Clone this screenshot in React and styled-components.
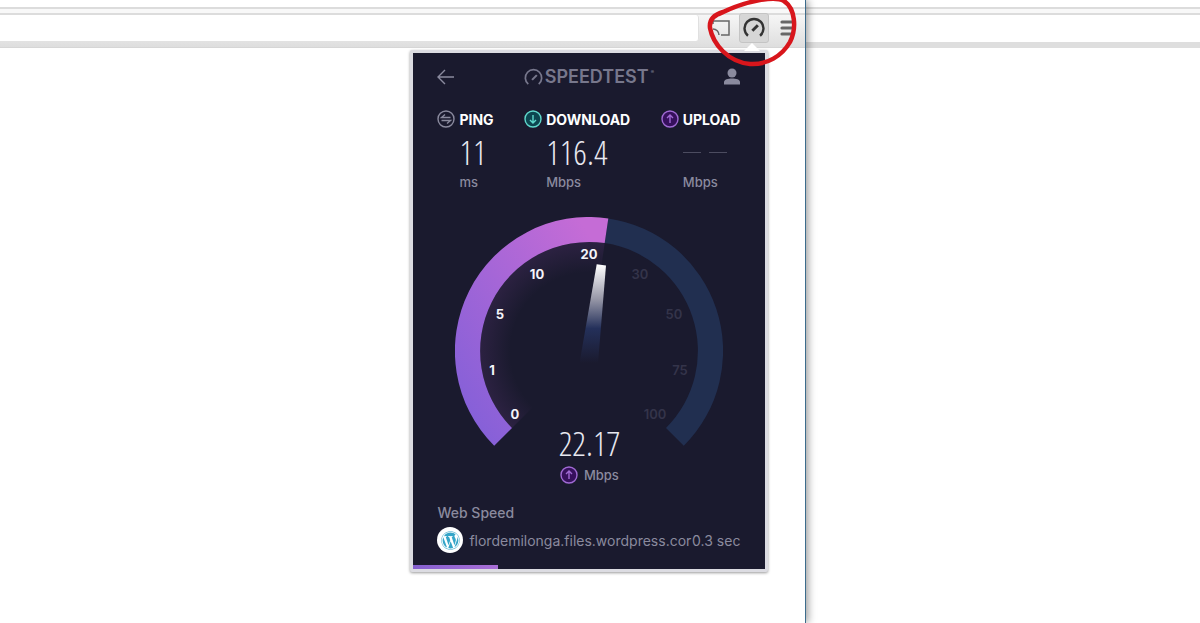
import styled, { createGlobalStyle } from 'styled-components';
import { FaWordpress } from 'react-icons/fa';

const GlobalStyle = createGlobalStyle`
  *,
  *::before,
  *::after {
    box-sizing: border-box;
  }

  body {
    margin: 0;
    background: #fff;
    font-family: Inter, 'Open Sans', sans-serif;
    overflow: hidden;
  }

  h1, h2, p, dl, dt, dd {
    margin: 0;
  }
`;

const Desktop = styled.div`
  display: flex;
  min-height: 100vh;
`;

const Window = styled.section`
  position: relative;
  flex: ${({ $front }) => ($front ? '0 0 67.2%' : '1')};
  min-width: 0;
  z-index: ${({ $front }) => ($front ? 1 : 0)};
  background: #fff;
  border-right: ${({ $front }) => ($front ? '1px solid #3d6c8c' : 'none')};
  box-shadow: ${({ $front }) => ($front ? '2px 0 8px rgba(0, 0, 0, 0.4)' : 'none')};
`;

const TabStrip = styled.div`
  height: 15px;
  padding-top: 7px;

  &::after {
    content: '';
    display: block;
    height: 8px;
    background: #f8f8f8;
    border-top: 2px solid #dcdcdc;
    border-bottom: 2px solid #dcdcdc;
  }
`;

const Toolbar = styled.div`
  display: flex;
  align-items: center;
  gap: 8px;
  height: 33px;
  padding: ${({ $front }) => ($front ? '0 8px 6px 0' : '0')};
  background: ${({ $front }) => ($front ? 'linear-gradient(#f6f6f6, #dedede)' : '#fff')};
  border-bottom: ${({ $front }) => ($front ? '1px solid #d6d6d6' : '6px solid #dedede')};
`;

const Address = styled.input`
  flex: 1;
  min-width: 0;
  height: 26px;
  margin-right: 4px;
  border: none;
  border-right: 1px solid #e0e0e0;
  border-radius: 0 3px 3px 0;
  background: #fff;
  outline: none;
`;

const ToolButton = styled.button`
  display: flex;
  align-items: center;
  justify-content: center;
  flex: none;
  width: ${({ $active }) => ($active ? '30px' : '20px')};
  height: 30px;
  padding: 0;
  border: 1px solid ${({ $active }) => ($active ? '#c4c4c4' : 'transparent')};
  border-radius: 3px;
  background: ${({ $active }) => ($active ? '#d6d6d6' : 'transparent')};
  color: ${({ $active }) => ($active ? '#333' : '#666')};
`;

const Popup = styled.main`
  position: absolute;
  top: 50px;
  right: 37px;
  width: 358px;
  border: 3px solid #dcdce2;
  border-radius: 2px;
  background: #1a1a2e;
  color: #8a8a9e;
  box-shadow: 0 1px 3px rgba(0, 0, 0, 0.4);

  &::before {
    content: '';
    position: absolute;
    top: -10px;
    right: 5px;
    border: 8px solid transparent;
    border-top: none;
    border-bottom-color: #fff;
  }
`;

const Header = styled.header`
  display: flex;
  align-items: center;
  justify-content: space-between;
  height: 48px;
  padding: 0 24px;
`;

const IconButton = styled.button`
  display: flex;
  padding: 0;
  border: none;
  background: none;
  color: inherit;
`;

const Brand = styled.h1`
  display: flex;
  align-items: center;
  gap: 2px;
  color: #77778c;
  font-size: 18px;
  font-weight: 600;
  line-height: 20px;

  sup {
    align-self: flex-start;
    font-size: 5px;
    line-height: 10px;
  }
`;

const Stats = styled.dl`
  display: flex;
  justify-content: space-between;
  height: 108px;
  padding: 8px 25px 0 24px;
`;

const Stat = styled.div`
  display: grid;
  grid-template-columns: 18px auto;
  grid-template-rows: 20px 46px 14px;
  column-gap: 4px;
`;

const StatName = styled.dt`
  grid-column: 1 / 3;
  display: flex;
  align-items: center;
  gap: 4px;
  color: #fff;
  font-size: 14px;
  font-weight: 700;
`;

const Value = styled.dd`
  grid-column: 2;
  color: #e8e8f0;
  font-family: 'Open Sans Condensed Light', 'Noto Sans ExtraCondensed Light', 'Roboto Condensed', Roboto, sans-serif;
  font-size: 34px;
  font-weight: 200;
  line-height: 46px;
`;

const Dashes = styled.dd`
  grid-column: 2;
  display: flex;
  align-items: center;
  gap: 8px;

  &::before,
  &::after {
    content: '';
    width: 18px;
    height: 1px;
    background: #4c4c60;
  }
`;

const Unit = styled.dd`
  grid-column: 2;
  font-size: 13px;
  font-weight: 500;
  line-height: 14px;
`;

const GaugeSvg = styled.svg`
  display: block;
  width: 268px;
  height: 230px;
  margin: 8px auto 0;
`;

const GaugeLabel = styled.text`
  fill: ${({ $lit }) => ($lit ? '#f4f4fa' : '#34344a')};
  font-size: 13px;
  font-weight: ${({ $lit }) => ($lit ? 700 : 600)};
  text-anchor: middle;
`;

const Reading = styled.div`
  display: flex;
  flex-direction: column;
  align-items: center;
  margin-top: -26px;
`;

const ReadingValue = styled(Value).attrs({ as: 'p' })`
  line-height: 44px;
`;

const ReadingUnit = styled.p`
  display: flex;
  align-items: center;
  gap: 6px;
  font-size: 13px;
  font-weight: 500;
  line-height: 20px;
`;

const WebSpeed = styled.section`
  padding: 20px 25px 12px 24px;
  font-size: 14px;
`;

const SectionTitle = styled.h2`
  font-size: 14px;
  font-weight: 500;
  line-height: 16px;
`;

const Site = styled.p`
  display: flex;
  align-items: center;
  margin-top: 6px;
`;

const SiteBadge = styled.span`
  display: flex;
  align-items: center;
  justify-content: center;
  flex: none;
  width: 26px;
  height: 26px;
  margin-right: 6px;
  border-radius: 50%;
  background: #fff;
  color: #35a5c8;
`;

const Host = styled.span`
  flex: 1;
  min-width: 0;
  overflow: hidden;
  white-space: nowrap;
`;

const LoadTime = styled.span`
  flex: none;
`;

const Progress = styled.div`
  height: 4px;
  width: 24%;
  background: linear-gradient(90deg, #8560d0, #a96fd6);
`;

const Scribble = styled.svg`
  position: absolute;
  top: 0;
  right: 0;
  width: 106px;
  height: 72px;
  pointer-events: none;
`;

const ticks = [
  { label: '0', x: 60, y: 202 },
  { label: '1', x: 37, y: 158 },
  { label: '5', x: 45, y: 102 },
  { label: '10', x: 82, y: 62 },
  { label: '20', x: 134, y: 42 },
  { label: '30', x: 185, y: 62 },
  { label: '50', x: 219, y: 102 },
  { label: '75', x: 225, y: 158 },
  { label: '100', x: 200, y: 202 },
];

const SPEED = 22.17;

const CircleIcon = ({ kind }) => {
  const colors = { ping: '#8a8a9e', download: '#5fd9cc', upload: '#a06ad4' };
  const fills = { ping: 'none', download: '#0c4650', upload: '#36105c' };
  return (
    <svg width="18" height="18" viewBox="0 0 18 18" fill="none" stroke={colors[kind]} strokeWidth="1.4" aria-hidden="true">
      <circle cx="9" cy="9" r="8" fill={fills[kind]} />
      {kind === 'ping' && <path d="M13.5 7.5H4.5L8 4.5M4.5 10.5h9L10 13.5" />}
      {kind === 'download' && <path d="M9 5v8M6 10l3 3 3-3" />}
      {kind === 'upload' && <path d="M9 13V5M6 8l3-3 3 3" />}
    </svg>
  );
};

const DialIcon = ({ size, width }) => (
  <svg width={size} height={size} viewBox="0 0 20 20" fill="none" stroke="currentColor" strokeWidth={width} aria-hidden="true">
    <path d="M4.5 17A8.6 8.6 0 1 1 15.5 17" />
    <path d="M8.5 12.5L13.5 7.5" strokeWidth={width + 0.4} />
  </svg>
);

const Gauge = () => (
  <GaugeSvg viewBox="0 0 268 230" role="img" aria-label={`${SPEED} Mbps`}>
    <defs>
      <linearGradient id="fill" x1="0" y1="1" x2="1" y2="0">
        <stop offset="0.1" stopColor="#8560d8" />
        <stop offset="0.9" stopColor="#c56cd6" />
      </linearGradient>
      <linearGradient id="needle" x1="0" y1="0" x2="0" y2="1">
        <stop offset="0" stopColor="#fff" />
        <stop offset="0.35" stopColor="#9898a8" />
        <stop offset="0.65" stopColor="#24305a" />
        <stop offset="1" stopColor="#1a1a2e" />
      </linearGradient>
      <radialGradient id="glow" gradientUnits="userSpaceOnUse" cx="134" cy="134" r="109">
        <stop offset="0.72" stopColor="#8a48a8" stopOpacity="0" />
        <stop offset="1" stopColor="#8a48a8" stopOpacity="0.16" />
      </radialGradient>
    </defs>
    <path d="M134 134L57 211A109 109 0 0 1 149.7 26.1Z" fill="url(#glow)" />
    <path d="M153.3 1.4A134 134 0 0 1 228.8 228.8L211 211A109 109 0 0 0 149.7 26.1Z" fill="#212f50" />
    <path d="M39.2 228.8A134 134 0 0 1 153.3 1.4L149.7 26.1A109 109 0 0 0 57 211Z" fill="url(#fill)" />
    <path d="M141.7 47.3L151 48.5L143 146H124.5Z" fill="url(#needle)" />
    {ticks.map(({ label, x, y }) => (
      <GaugeLabel key={label} x={x} y={y} $lit={Number(label) <= SPEED}>
        {label}
      </GaugeLabel>
    ))}
  </GaugeSvg>
);

const SpeedtestPopup = () => (
  <Popup>
    <Header>
      <IconButton aria-label="Back">
        <svg width="17" height="16" viewBox="0 0 17 16" fill="none" stroke="currentColor" strokeWidth="1.4">
          <path d="M17 8H1M8 1L1 8l7 7" />
        </svg>
      </IconButton>
      <Brand>
        <DialIcon size={19} width={1.8} />
        <span>SPEEDTEST</span>
        <sup>®</sup>
      </Brand>
      <IconButton aria-label="Account">
        <svg width="18" height="18" viewBox="0 0 18 18" fill="currentColor">
          <circle cx="9" cy="5" r="4.5" />
          <path d="M1 16.5v-2.5c0-2.5 4-3.5 8-3.5s8 1 8 3.5v2.5z" />
        </svg>
      </IconButton>
    </Header>
    <Stats>
      <Stat>
        <StatName><CircleIcon kind="ping" />PING</StatName>
        <Value>11</Value>
        <Unit>ms</Unit>
      </Stat>
      <Stat>
        <StatName><CircleIcon kind="download" />DOWNLOAD</StatName>
        <Value>116.4</Value>
        <Unit>Mbps</Unit>
      </Stat>
      <Stat>
        <StatName><CircleIcon kind="upload" />UPLOAD</StatName>
        <Dashes />
        <Unit>Mbps</Unit>
      </Stat>
    </Stats>
    <Gauge />
    <Reading>
      <ReadingValue>{SPEED}</ReadingValue>
      <ReadingUnit><CircleIcon kind="upload" />Mbps</ReadingUnit>
    </Reading>
    <WebSpeed>
      <SectionTitle>Web Speed</SectionTitle>
      <Site>
        <SiteBadge><FaWordpress size={19} /></SiteBadge>
        <Host>flordemilonga.files.wordpress.cor</Host>
        <LoadTime>0.3 sec</LoadTime>
      </Site>
    </WebSpeed>
    <Progress />
  </Popup>
);

const App = () => (
  <>
    <GlobalStyle />
    <Desktop>
      <Window $front>
        <TabStrip />
        <Toolbar $front>
          <Address aria-label="Address" />
          <ToolButton aria-label="Cast">
            <svg width="18" height="16" viewBox="0 0 18 16" fill="none" stroke="currentColor" strokeWidth="1.5">
              <path d="M1 4V1h16v14h-8M1 9a6 6 0 0 1 6 6" />
            </svg>
          </ToolButton>
          <ToolButton $active aria-label="Speedtest">
            <DialIcon size={22} width={2.2} />
          </ToolButton>
          <ToolButton aria-label="Menu">
            <svg width="15" height="16" viewBox="0 0 15 16" fill="none" stroke="currentColor" strokeWidth="3.2" strokeLinecap="round">
              <path d="M2 2h11M2 8h11M2 14h11" />
            </svg>
          </ToolButton>
        </Toolbar>
        <SpeedtestPopup />
        <Scribble viewBox="0 0 106 72" fill="none" stroke="#d8161c" strokeWidth="4.5" strokeLinecap="round">
          <path d="M24 12C14 15 10 20 11 28C14 44 29 62 51 64C68 65 83 56 91 42C98 28 96 8 85 1C76 -4 48 0 20 14" />
        </Scribble>
      </Window>
      <Window>
        <TabStrip />
        <Toolbar />
      </Window>
    </Desktop>
  </>
);

export default App;
